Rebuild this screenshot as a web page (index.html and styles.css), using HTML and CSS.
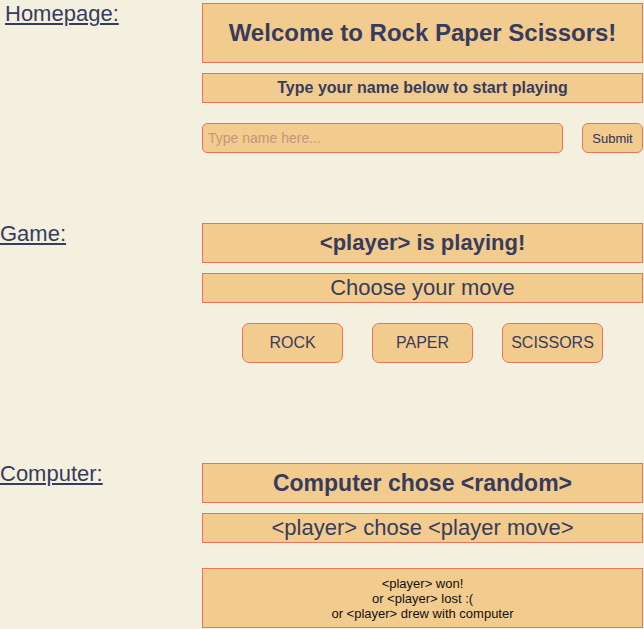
FILE: index.html
```html
<!DOCTYPE html>
<html lang="en">
<head>
<meta charset="utf-8">
<title>Rock Paper Scissors</title>
<link rel="stylesheet" href="styles.css">
</head>
<body>
<main class="page">
  <section class="section">
    <h2 class="label label--inset">Homepage:</h2>
    <div class="panel">
      <h1 class="box box--hero">Welcome to Rock Paper Scissors!</h1>
      <p class="box box--sub">Type your name below to start playing</p>
      <form class="name-form">
        <input class="name-input" type="text" placeholder="Type name here...">
        <button class="btn btn--submit" type="button">Submit</button>
      </form>
    </div>
  </section>

  <section class="section section--game">
    <h2 class="label">Game:</h2>
    <div class="panel">
      <h3 class="box box--title">&lt;player&gt; is playing!</h3>
      <p class="box box--line">Choose your move</p>
      <div class="moves">
        <button class="btn btn--move" type="button">ROCK</button>
        <button class="btn btn--move" type="button">PAPER</button>
        <button class="btn btn--move" type="button">SCISSORS</button>
      </div>
    </div>
  </section>

  <section class="section section--computer">
    <h2 class="label">Computer:</h2>
    <div class="panel">
      <h3 class="box box--title box--title-lg">Computer chose &lt;random&gt;</h3>
      <p class="box box--line">&lt;player&gt; chose &lt;player move&gt;</p>
      <div class="box box--result">
        <span>&lt;player&gt; won!</span>
        <span>or &lt;player&gt; lost :(</span>
        <span>or &lt;player&gt; drew with computer</span>
      </div>
    </div>
  </section>
</main>
</body>
</html>
```

FILE: styles.css
```css
* {
  box-sizing: border-box;
}

body {
  margin: 0;
  background: #f4f0df;
  color: #383c5c;
  font-family: "Liberation Sans", Arial, sans-serif;
}

.page {
  display: flex;
  flex-direction: column;
  padding-top: 3px;
}

.section {
  display: grid;
  grid-template-columns: 202px 441px;
  align-items: start;
}

.section--game {
  margin-top: 70px;
}

.section--computer {
  margin-top: 100px;
}

.label {
  margin: 0;
  font-size: 22px;
  line-height: 21px;
  font-weight: normal;
  text-decoration: underline;
  text-decoration-thickness: 2px;
  text-underline-offset: 2px;
  color: #383c5c;
}

.label--inset {
  padding-left: 5px;
}

.panel {
  display: flex;
  flex-direction: column;
  gap: 10px;
}

.box {
  margin: 0;
  display: flex;
  align-items: center;
  justify-content: center;
  background: #f2cb8e;
  border: 1px solid #e8755a;
  text-align: center;
}

.box--hero {
  height: 60px;
  font-size: 24px;
  font-weight: bold;
}

.box--sub {
  height: 30px;
  font-size: 16px;
  font-weight: bold;
}

.box--title {
  height: 40px;
  font-size: 22px;
  font-weight: bold;
}

.box--title-lg {
  font-size: 23px;
}

.box--line {
  height: 30px;
  font-size: 22px;
  font-weight: normal;
}

.box--result {
  margin-top: 15px;
  height: 60px;
  flex-direction: column;
  font-size: 13px;
  line-height: 15px;
  color: #111;
}

.name-form {
  margin: 10px 0 0;
  display: flex;
  justify-content: space-between;
}

.name-input {
  width: 361px;
  height: 30px;
  padding: 0 5px;
  background: #f2cb8e;
  border: 1px solid #e8755a;
  border-radius: 5px;
  font-family: "Liberation Sans", Arial, sans-serif;
  font-size: 14px;
  color: #383c5c;
  outline: none;
}

.name-input::placeholder {
  color: #c4977a;
}

.btn {
  background: #f2cb8e;
  border: 1px solid #e8755a;
  border-radius: 6px;
  font-family: "Liberation Sans", Arial, sans-serif;
  color: #383c5c;
  padding: 0;
}

.btn--submit {
  width: 61px;
  height: 30px;
  font-size: 13px;
  color: #30334a;
}

.moves {
  margin-top: 10px;
  display: flex;
  justify-content: center;
  gap: 29px;
}

.btn--move {
  width: 101px;
  height: 40px;
  font-size: 16px;
  border-radius: 7px;
}
```
